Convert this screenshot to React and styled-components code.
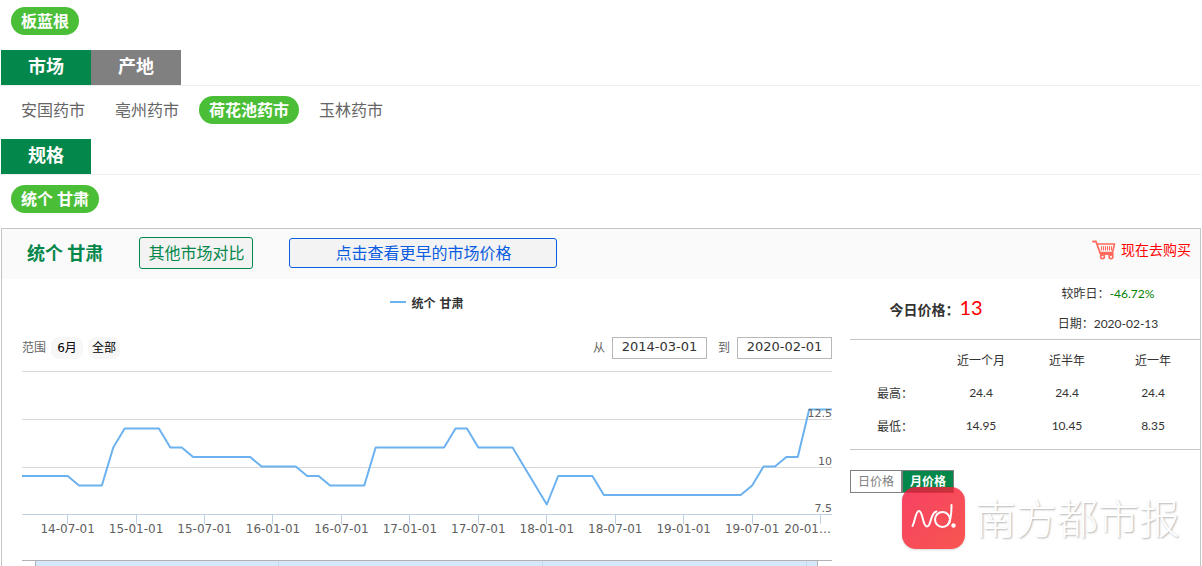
import React from "react";
import styled, { createGlobalStyle } from "styled-components";
import { useState } from "react";

const markets = ["安国药市", "亳州药市", "荷花池药市", "玉林药市"];

// one price per month, starting 2014-03
const prices = [
  9.5, 9.5, 9.5, 9.5, 9.5, 9, 9, 9, 11, 12, 12, 12, 12, 11, 11, 10.5, 10.5,
  10.5, 10.5, 10.5, 10.5, 10, 10, 10, 10, 9.5, 9.5, 9, 9, 9, 9, 11, 11, 11, 11,
  11, 11, 11, 12, 12, 11, 11, 11, 11, 10, 9, 8, 9.5, 9.5, 9.5, 9.5, 8.5, 8.5,
  8.5, 8.5, 8.5, 8.5, 8.5, 8.5, 8.5, 8.5, 8.5, 8.5, 8.5, 9, 10, 10, 10.5, 10.5,
  13, 13, 13,
];

const dateLabels = [
  "14-07-01",
  "15-01-01",
  "15-07-01",
  "16-01-01",
  "16-07-01",
  "17-01-01",
  "17-07-01",
  "18-01-01",
  "18-07-01",
  "19-01-01",
  "19-07-01",
  "20-01…",
];

const stats = [
  { label: "最高：", values: ["24.4", "24.4", "24.4"] },
  { label: "最低：", values: ["14.95", "10.45", "8.35"] },
];

const CHART_WIDTH = 810;
const monthX = (i) => (i * CHART_WIDTH) / (prices.length - 1);
const priceY = (price) => 155 - (price - 7.5) * 19;

function App() {
  const [tab, setTab] = useState("市场");
  const [market, setMarket] = useState("荷花池药市");

  return (
    <>
      <GlobalStyle />
      <Page>
        <PillRow>
          <Pill $active>板蓝根</Pill>
        </PillRow>
        <TabBar>
          {["市场", "产地"].map((t) => (
            <Tab key={t} $active={t === tab} onClick={() => setTab(t)}>
              {t}
            </Tab>
          ))}
        </TabBar>
        <PillRow>
          {markets.map((m) => (
            <Pill key={m} $active={m === market} onClick={() => setMarket(m)}>
              {m}
            </Pill>
          ))}
        </PillRow>
        <TabBar>
          <Tab $active>规格</Tab>
        </TabBar>
        <PillRow>
          <Pill $active>统个 甘肃</Pill>
        </PillRow>
        <Panel>
          <PanelHeader>
            <PanelTitle>统个 甘肃</PanelTitle>
            <CompareButton>其他市场对比</CompareButton>
            <HistoryButton>点击查看更早的市场价格</HistoryButton>
            <BuyLink href="#buy">
              <CartIcon />
              <BuyText>现在去购买</BuyText>
            </BuyLink>
          </PanelHeader>
          <PanelBody>
            <PriceChart />
            <Summary />
          </PanelBody>
        </Panel>
      </Page>
    </>
  );
}

function PriceChart() {
  const [from, setFrom] = useState("2014-03-01");
  const [to, setTo] = useState("2020-02-01");

  return (
    <ChartColumn>
      <Legend>
        <LegendLine />
        统个 甘肃
      </Legend>
      <RangeRow>
        <RangeGroup>
          范围
          <RangeButton>6月</RangeButton>
          <RangeButton>全部</RangeButton>
        </RangeGroup>
        <DateGroup>
          <DateLabel>
            从
            <DateInput value={from} onChange={(e) => setFrom(e.target.value)} />
          </DateLabel>
          <DateLabel>
            到
            <DateInput value={to} onChange={(e) => setTo(e.target.value)} />
          </DateLabel>
        </DateGroup>
      </RangeRow>
      <ChartSvg viewBox="0 0 810 207" role="img" aria-label="统个 甘肃">
        <g stroke="#d8d8d8" shapeRendering="crispEdges">
          <path d="M0 12.5H810M0 60.5H810M0 108.5H810" />
        </g>
        <g stroke="#c0d0e0" shapeRendering="crispEdges">
          <path d="M0 155.5H810" />
          {dateLabels.map((label, i) => (
            <path key={label} d={`M${monthX(4 + i * 6)} 155v10`} />
          ))}
        </g>
        <polyline
          points={prices.map((p, i) => `${monthX(i)},${priceY(p)}`).join(" ")}
          fill="none"
          stroke="#6cb2f0"
          strokeWidth="2"
          strokeLinejoin="round"
        />
        <ValueText x="810" y="58">
          12.5
        </ValueText>
        <ValueText x="810" y="106">
          10
        </ValueText>
        <ValueText x="810" y="153">
          7.5
        </ValueText>
        {dateLabels.map((label, i) => {
          const last = i === dateLabels.length - 1;
          return (
            <AxisText
              key={label}
              x={last ? 809 : monthX(4 + i * 6)}
              y="174"
              textAnchor={last ? "end" : "middle"}
            >
              {label}
            </AxisText>
          );
        })}
        {/* top edge of the navigator */}
        <rect x="14" y="201" width="782" height="6" fill="#d5e7fa" />
        <g shapeRendering="crispEdges" fill="none">
          <path d="M256.5 202v5M520.5 202v5M784.5 202v5" stroke="#c4d8ec" />
          <path d="M0 201.5H810M13.5 202v5M795.5 202v5" stroke="#b2b1b6" />
        </g>
      </ChartSvg>
    </ChartColumn>
  );
}

function Summary() {
  const [period, setPeriod] = useState("月价格");

  return (
    <SummaryColumn>
      <TodayBlock>
        <TodayPrice>
          今日价格：<Price>13</Price>
        </TodayPrice>
        <TodayDetails>
          <div>
            较昨日：<Change>-46.72%</Change>
          </div>
          <div>日期：2020-02-13</div>
        </TodayDetails>
      </TodayBlock>
      <StatsBlock>
        <StatsTable>
          <thead>
            <tr>
              <td />
              <th scope="col">近一个月</th>
              <th scope="col">近半年</th>
              <th scope="col">近一年</th>
            </tr>
          </thead>
          <tbody>
            {stats.map((row) => (
              <tr key={row.label}>
                <th scope="row">{row.label}</th>
                {row.values.map((v, i) => (
                  <td key={i}>{v}</td>
                ))}
              </tr>
            ))}
          </tbody>
        </StatsTable>
      </StatsBlock>
      <PeriodSwitch>
        {["日价格", "月价格"].map((p) => (
          <PeriodButton
            key={p}
            $active={p === period}
            onClick={() => setPeriod(p)}
          >
            {p}
          </PeriodButton>
        ))}
      </PeriodSwitch>
      <Watermark>
        <NdLogo />
        南方都市报
      </Watermark>
    </SummaryColumn>
  );
}

function CartIcon() {
  return (
    <svg width="24" height="20" viewBox="0 0 24 20" fill="none">
      <g stroke="#ff6a5c" strokeLinecap="round" strokeLinejoin="round">
        <path d="M1 1.5h3l4.5 12.5h12.5" strokeWidth="1.8" />
        <path d="M5.5 4h17l-2 8.500h-12" strokeWidth="1.6" />
        <path
          d="M9.500 6.500v3.500M11.500 6.500v3.500M13.500 6.500v3.500M15.500 6.500v3.500M17.500 6.500v3.500M19.500 6.500v3.500"
          strokeWidth="1.1"
        />
        <circle cx="10.5" cy="16.8" r="1.9" strokeWidth="1.6" />
        <circle cx="19" cy="16.8" r="1.9" strokeWidth="1.6" />
      </g>
    </svg>
  );
}

function NdLogo() {
  return (
    <LogoSvg width="63" height="63" viewBox="0 0 63 63" fill="none">
      <defs>
        <linearGradient id="logoFill" x1="0" y1="0" x2="1" y2="1">
          <stop offset="0" stopColor="#ff1642" />
          <stop offset="1" stopColor="#ff3029" />
        </linearGradient>
      </defs>
      <rect width="63" height="62" rx="14" fill="url(#logoFill)" opacity="0.78" />
      <g stroke="#fff" strokeWidth="2" strokeLinecap="round">
        <path d="M10.5 39C13 35 13.500 24 17 24C21 24 20.500 39.500 25 39.500C29.500 39.500 28 25.500 34.500 24.500" />
        <circle cx="40.5" cy="32.5" r="7.5" />
        <path d="M49.500 18C49.500 25 49.500 33 46 37.500" />
      </g>
      <circle cx="51.5" cy="38.5" r="2.2" fill="#fff" />
    </LogoSvg>
  );
}

const GlobalStyle = createGlobalStyle`
  * {
    box-sizing: border-box;
  }
  body {
    margin: 0;
    background: #fff;
    color: #333;
    font-family: Lato, "Noto Sans CJK SC", sans-serif;
  }
  button,
  input {
    font-family: inherit;
    margin: 0;
  }
  button {
    cursor: pointer;
  }
`;

const Page = styled.div`
  padding: 7px 1px 0;
`;

const PillRow = styled.div`
  display: flex;
  gap: 10px;
  padding: 0 10px 15px;
`;

const Pill = styled.button`
  height: 28px;
  padding: 0 10px;
  border: none;
  border-radius: 14px;
  background: ${(props) => (props.$active ? "#4bbe37" : "transparent")};
  color: ${(props) => (props.$active ? "#fff" : "#666")};
  font-size: 16px;
  font-weight: ${(props) => (props.$active ? "bold" : "normal")};
  line-height: 28px;
`;

const TabBar = styled.div`
  display: flex;
  margin-bottom: 10px;
  border-bottom: 1px solid #eee;
`;

const Tab = styled.button`
  width: 90px;
  height: 35px;
  padding: 0 0 3px;
  border: none;
  background: ${(props) => (props.$active ? "#04874a" : "#808080")};
  color: #fff;
  font-size: 18px;
  font-weight: bold;
  line-height: 32px;
`;

const Panel = styled.div`
  border: 1px solid #c5c5c5;
  border-bottom: none;
`;

const PanelHeader = styled.div`
  display: flex;
  align-items: center;
  gap: 36px;
  height: 50px;
  padding: 0 9px 2px 25px;
  background: #fafafa;
`;

const PanelTitle = styled.h1`
  margin: 0;
  color: #04874a;
  font-size: 18px;
  line-height: 24px;
`;

const HeaderButton = styled.button`
  padding: 0 8px 2px;
  border: 1px solid;
  border-radius: 3px;
  background: #f3f3f3;
  font-size: 16px;
`;

const CompareButton = styled(HeaderButton)`
  height: 32px;
  color: #04874a;
`;

const HistoryButton = styled(HeaderButton)`
  width: 268px;
  height: 30px;
  color: #0a5ce0;
`;

const BuyLink = styled.a`
  display: flex;
  align-items: center;
  align-self: flex-start;
  gap: 5px;
  height: 42px;
  margin-left: auto;
  color: #f00;
  font-size: 14px;
  text-decoration: none;
`;

const BuyText = styled.span`
  padding-bottom: 3px;
`;

const PanelBody = styled.div`
  display: flex;
`;

const ChartColumn = styled.div`
  flex: 1;
  min-width: 0;
  padding: 13px 18px 0 20px;
`;

const Legend = styled.div`
  display: flex;
  align-items: center;
  justify-content: center;
  gap: 5px;
  height: 20px;
  color: #333;
  font-family: "DejaVu Sans", "Noto Sans CJK SC", sans-serif;
  font-size: 12px;
  font-weight: bold;
`;

const LegendLine = styled.span`
  width: 16px;
  height: 2px;
  background: #6cb2f0;
`;

const RangeRow = styled.div`
  display: flex;
  justify-content: space-between;
  margin-top: 25px;
  color: #666;
  font-size: 12px;
  line-height: 18px;
`;

const RangeGroup = styled.div`
  display: flex;
  align-items: center;
  gap: 5px;
`;

const RangeButton = styled.button`
  width: 32px;
  height: 22px;
  padding: 0 0 3px;
  border: none;
  border-radius: 8px;
  background: #f7f7f7;
  color: #000;
  font-family: "DejaVu Sans", "Noto Sans CJK SC", sans-serif;
  font-size: 12px;
`;

const DateGroup = styled.div`
  display: flex;
  gap: 11px;
`;

const DateLabel = styled.label`
  display: flex;
  align-items: center;
  gap: 7px;
`;

const DateInput = styled.input`
  width: 95px;
  height: 22px;
  padding: 0 0 3px;
  border: 1px solid #b8b8b8;
  background: #fff;
  color: #333;
  font-family: "DejaVu Sans", sans-serif;
  font-size: 13px;
  text-align: center;
`;

const ChartSvg = styled.svg`
  display: block;
  width: 100%;
  height: auto;
`;

const AxisText = styled.text`
  fill: #606060;
  font-family: "DejaVu Sans", sans-serif;
  font-size: 12px;
`;

const ValueText = styled(AxisText)`
  font-size: 11px;
  text-anchor: end;
`;

const SummaryColumn = styled.div`
  position: relative;
  width: 350px;
  font-size: 12px;
`;

const TodayBlock = styled.div`
  display: grid;
  grid-template-columns: 1fr 1fr;
  align-items: center;
  padding-right: 6px;
  border-bottom: 1px solid #c5c5c5;
  text-align: center;
`;

const TodayPrice = styled.div`
  padding-bottom: 4px;
  font-size: 14px;
  font-weight: bold;
`;

const Price = styled.span`
  color: #f00;
  font-size: 20px;
  font-weight: normal;
`;

const TodayDetails = styled.div`
  line-height: 30px;
`;

const Change = styled.span`
  color: #008000;
`;

const StatsBlock = styled.div`
  padding: 4px 4px 6px 2px;
  border-bottom: 1px solid #c5c5c5;
`;

const StatsTable = styled.table`
  width: 100%;
  border-collapse: collapse;
  table-layout: fixed;
  text-align: center;

  th,
  td {
    height: 33px;
    padding: 0 0 2px;
    font-weight: normal;
  }
`;

const PeriodSwitch = styled.div`
  display: flex;
  padding-top: 20px;
`;

const PeriodButton = styled.button`
  height: 23px;
  padding: 0 7px 2px;
  border: 1px solid #808080;
  background: ${(props) => (props.$active ? "#04874a" : "#fff")};
  color: ${(props) => (props.$active ? "#fff" : "#808080")};
  font-size: 12px;
  font-weight: ${(props) => (props.$active ? "bold" : "normal")};
`;

const Watermark = styled.div`
  position: absolute;
  top: 208px;
  left: 52px;
  display: flex;
  align-items: center;
  gap: 10px;
  color: #fff;
  font-size: 41px;
  font-weight: 300;
  line-height: 58px;
  text-shadow: 1px 1px 2px rgba(0, 0, 0, 0.3);
  white-space: nowrap;
  pointer-events: none;
`;

const LogoSvg = styled.svg`
  filter: drop-shadow(0 1px 1px rgba(0, 0, 0, 0.2));
`;

export default App;
